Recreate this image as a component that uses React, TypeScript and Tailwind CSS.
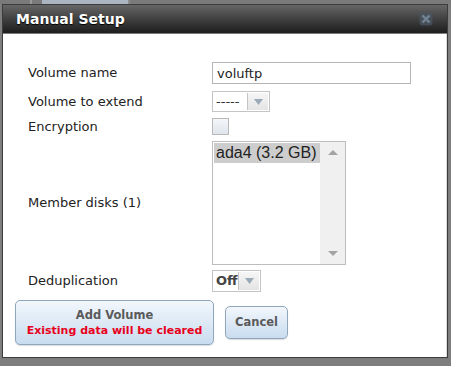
import { useState } from "react";

const label = "text-[13px] text-[#222] font-['DejaVu_Sans',Verdana,sans-serif]";

const Arrow = () => (
  <svg width="9" height="6" viewBox="0 0 9 6">
    <path d="M0 0h9L4.5 6z" fill="#9aaab9" />
  </svg>
);

const SelectBox = ({ value, bold, w }: { value: string; bold?: boolean; w: string }) => (
  <div className="flex h-full border border-[#c4c4c4] bg-white">
    <div
      className={`${w} flex items-center px-[3px] text-[13px] font-['DejaVu_Sans',Verdana,sans-serif] ${
        bold ? "font-bold text-[#444]" : "text-[#333]"
      }`}
    >
      {value}
    </div>
    <div className="w-[21px] border-l border-[#c4c4c4] bg-gradient-to-b from-[#f6f6f6] to-[#e4e4e4] flex items-center justify-center m-[1px] ml-0">
      <Arrow />
    </div>
  </div>
);

const Row = ({
  name,
  h,
  mt,
  children,
}: {
  name: string;
  h: string;
  mt: string;
  children: React.ReactNode;
}) => (
  <div className={`flex items-center ${h} ${mt}`}>
    <div className={`w-[184px] ${label}`}>{name}</div>
    <div className="h-full flex items-center">{children}</div>
  </div>
);

export default function App() {
  const [name, setName] = useState("voluftp");

  return (
    <div className="w-[451px] h-[366px] bg-[#7e7e7e] overflow-hidden">
      {/* page behind the dialog */}
      <div className="h-[4px] flex">
        <div className="w-[30px] bg-[#7a7a7a]" />
        <div className="w-[2px] bg-[#9a9a9a]" />
        <div className="w-[10px] bg-[#7a7a7a]" />
        <div className="w-[86px] bg-[#aab5c0]" />
        <div className="w-[2px] bg-[#8c8c8c]" />
        <div className="flex-1 bg-[#7a7a7a]" />
      </div>

      <div className="ml-[2px] w-[446px] h-[354px] border border-[#3c3c3c] flex flex-col bg-white">
        {/* title bar */}
        <div className="h-[29px] shrink-0 bg-gradient-to-b from-[#666] to-[#1e1e1e] border-b border-[#7c7c7c] flex items-center justify-between pl-[13px] pr-[14px]">
          <span className="text-white font-bold text-[14px] font-['DejaVu_Sans',Verdana,sans-serif] [text-shadow:0_1px_1px_#000]">
            Manual Setup
          </span>
          <svg width="14" height="14" viewBox="0 0 14 14" className="opacity-80 blur-[0.4px]">
            <rect x="0.5" y="0.5" width="13" height="13" rx="3" fill="#4a5560" />
            <path d="M3.5 3.5l7 7M10.5 3.5l-7 7" stroke="#7f95a8" strokeWidth="2.4" />
          </svg>
        </div>

        {/* form */}
        <div className="flex-1 flex flex-col pl-[25px] pt-[28px] border-r border-[#dcdcdc]">
          <Row name="Volume name" h="h-[22px]" mt="mt-0">
            <input
              value={name}
              onChange={(e) => setName(e.target.value)}
              className="w-[199px] h-[22px] border border-[#b5b5b5] px-[4px] text-[13px] text-[#222] outline-none font-['DejaVu_Sans',Verdana,sans-serif]"
            />
          </Row>
          <Row name="Volume to extend" h="h-[21px]" mt="mt-[7px]">
            <SelectBox value="-----" w="w-[34px]" />
          </Row>
          <Row name="Encryption" h="h-[17px]" mt="mt-[6px]">
            <div className="w-[17px] h-[17px] border border-[#b9b9b9] bg-gradient-to-b from-[#f4f6f9] to-[#dfe5ec]" />
          </Row>
          <Row name="Member disks (1)" h="h-[124px]" mt="mt-[6px]">
            <div className="w-[134px] h-[124px] border border-[#bdbdbd] flex">
              <div className="flex-1 pt-[1px] pl-[1px]">
                <div className="h-[20px] bg-[#cdcdcd] flex items-center pl-[2px] text-[16px] text-[#222] font-['Liberation_Sans',Arial,sans-serif]">
                  ada4 (3.2 GB)
                </div>
              </div>
              <div className="w-[25px] bg-[#f0f0f0] flex flex-col justify-between items-center py-[8px]">
                <svg width="10" height="5" viewBox="0 0 10 5">
                  <path d="M0 5h10L5 0z" fill="#a3a3a3" />
                </svg>
                <svg width="10" height="5" viewBox="0 0 10 5">
                  <path d="M0 0h10L5 5z" fill="#a3a3a3" />
                </svg>
              </div>
            </div>
          </Row>
          <Row name="Deduplication" h="h-[22px]" mt="mt-[5px]">
            <SelectBox value="Off" bold w="w-[25px]" />
          </Row>

          {/* buttons */}
          <div className="flex items-center gap-[11px] -ml-[13px] mt-[8px]">
            <button className="w-[199px] h-[45px] rounded-[5px] border border-[#8fa6bd] bg-gradient-to-b from-[#f2f7fc] to-[#c9dcef] flex flex-col items-center justify-center leading-[16px] font-['DejaVu_Sans',Verdana,sans-serif] font-bold shadow-[0_1px_1px_rgba(0,0,0,0.15)]">
              <span className="text-[11.5px] text-[#5a5a5a]">Add Volume</span>
              <span className="text-[11px] text-[#e8001c]">Existing data will be cleared</span>
            </button>
            <button className="w-[63px] h-[33px] rounded-[5px] border border-[#8fa6bd] bg-gradient-to-b from-[#f2f7fc] to-[#c9dcef] text-[11.5px] font-bold text-[#5a5a5a] font-['DejaVu_Sans',Verdana,sans-serif] shadow-[0_1px_1px_rgba(0,0,0,0.15)]">
              Cancel
            </button>
          </div>
        </div>
      </div>
    </div>
  );
}
